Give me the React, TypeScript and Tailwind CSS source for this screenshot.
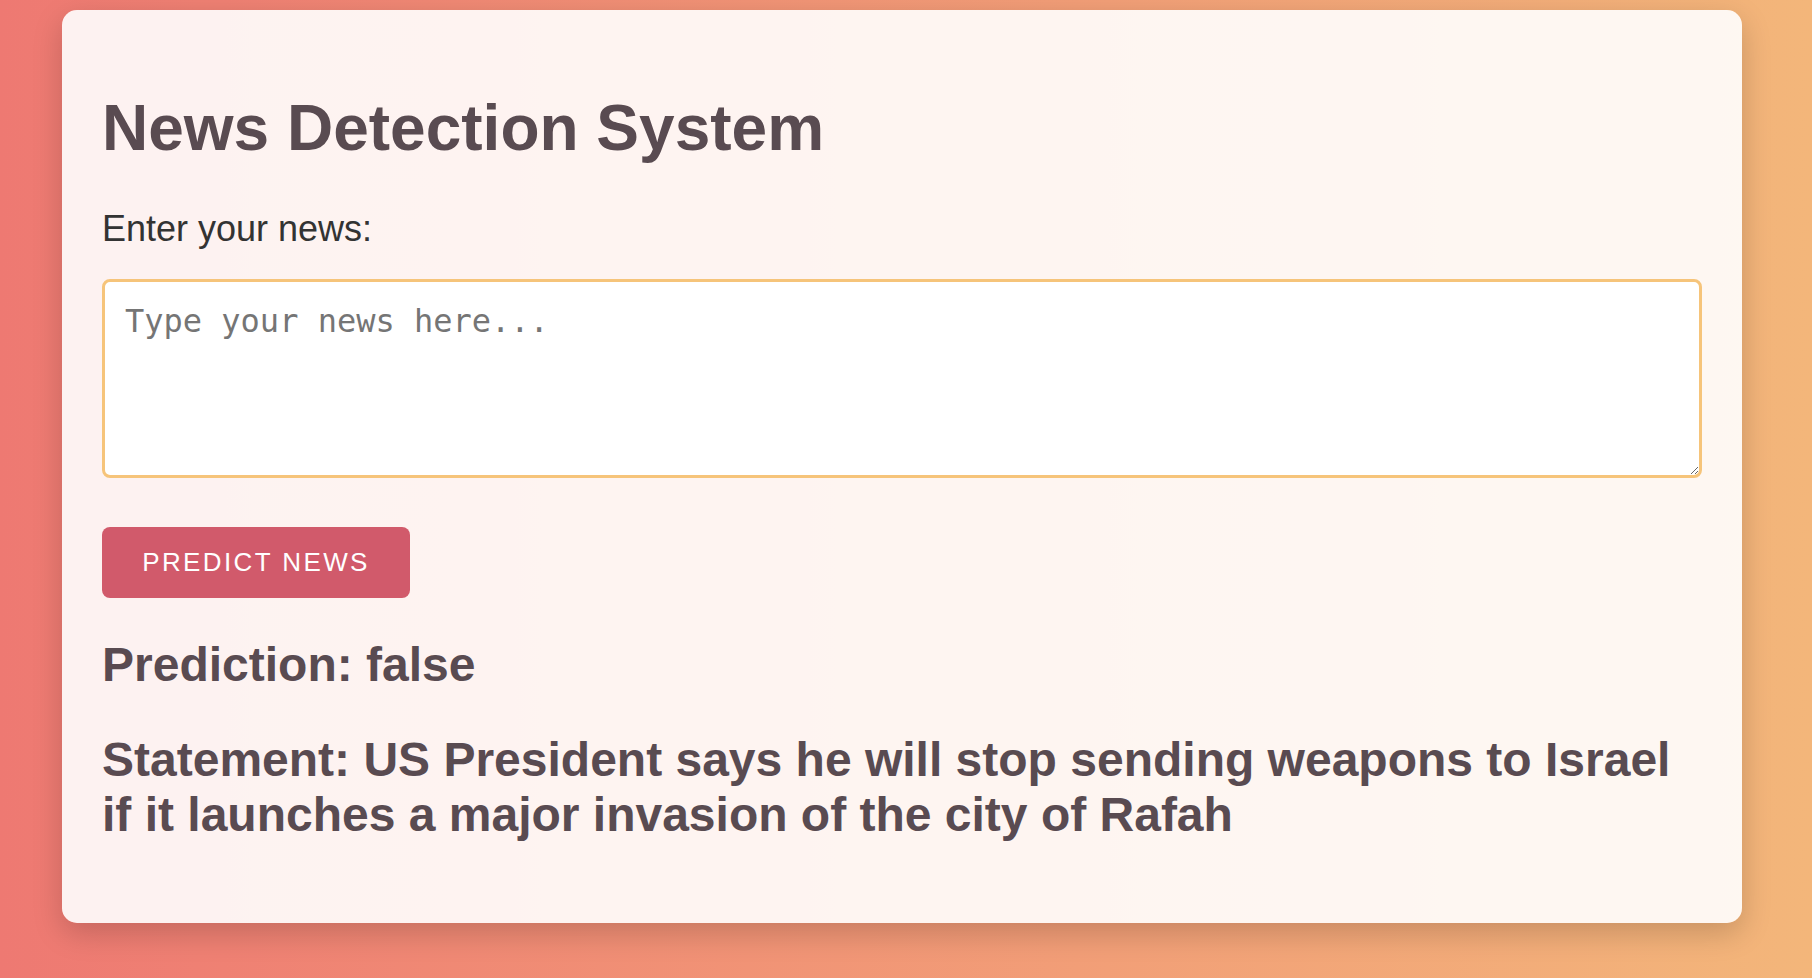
import React from "react";

export default function App() {
  return (
    <div
      className="min-h-screen w-full bg-gradient-to-r from-[#ee7972] to-[#f3b67a] pt-[10px] pb-[40px]"
      style={{ fontFamily: '"Liberation Sans", Arial, sans-serif' }}
    >
      <div className="ml-[62px] w-[1680px] rounded-[15px] bg-white/90 px-[40px] pt-[82px] pb-[80px] shadow-[0_10px_30px_rgba(0,0,0,0.18)]">
        <h1 className="text-[64px] font-bold leading-[1.15] text-[#594b51]">
          News Detection System
        </h1>
        <label className="mt-[42px] block text-[36px] leading-[1.15] text-[#333333]">
          Enter your news:
        </label>
        <textarea
          className="mt-[30px] block h-[199px] w-full rounded-[8px] border-[3px] border-[#f6c47a] bg-white px-[20px] pt-[21px] text-[32px] leading-[1.164] text-[#333] placeholder:text-[#757575] focus:outline-none"
          style={{ fontFamily: '"DejaVu Sans Mono", monospace' }}
          placeholder="Type your news here..."
        />
        <button className="mt-[49px] block h-[71px] w-[308px] rounded-[8px] bg-[#d15a6b] text-[26px] uppercase tracking-[2.4px] text-white">
          Predict News
        </button>
        <h2 className="mt-[39px] text-[48px] font-bold leading-[1.15] text-[#594b51]">
          Prediction: false
        </h2>
        <h2 className="mt-[40px] text-[48px] font-bold leading-[1.15] text-[#594b51]">
          Statement: US President says he will stop sending weapons to Israel if it launches a major invasion of the city of Rafah
        </h2>
      </div>
    </div>
  );
}
